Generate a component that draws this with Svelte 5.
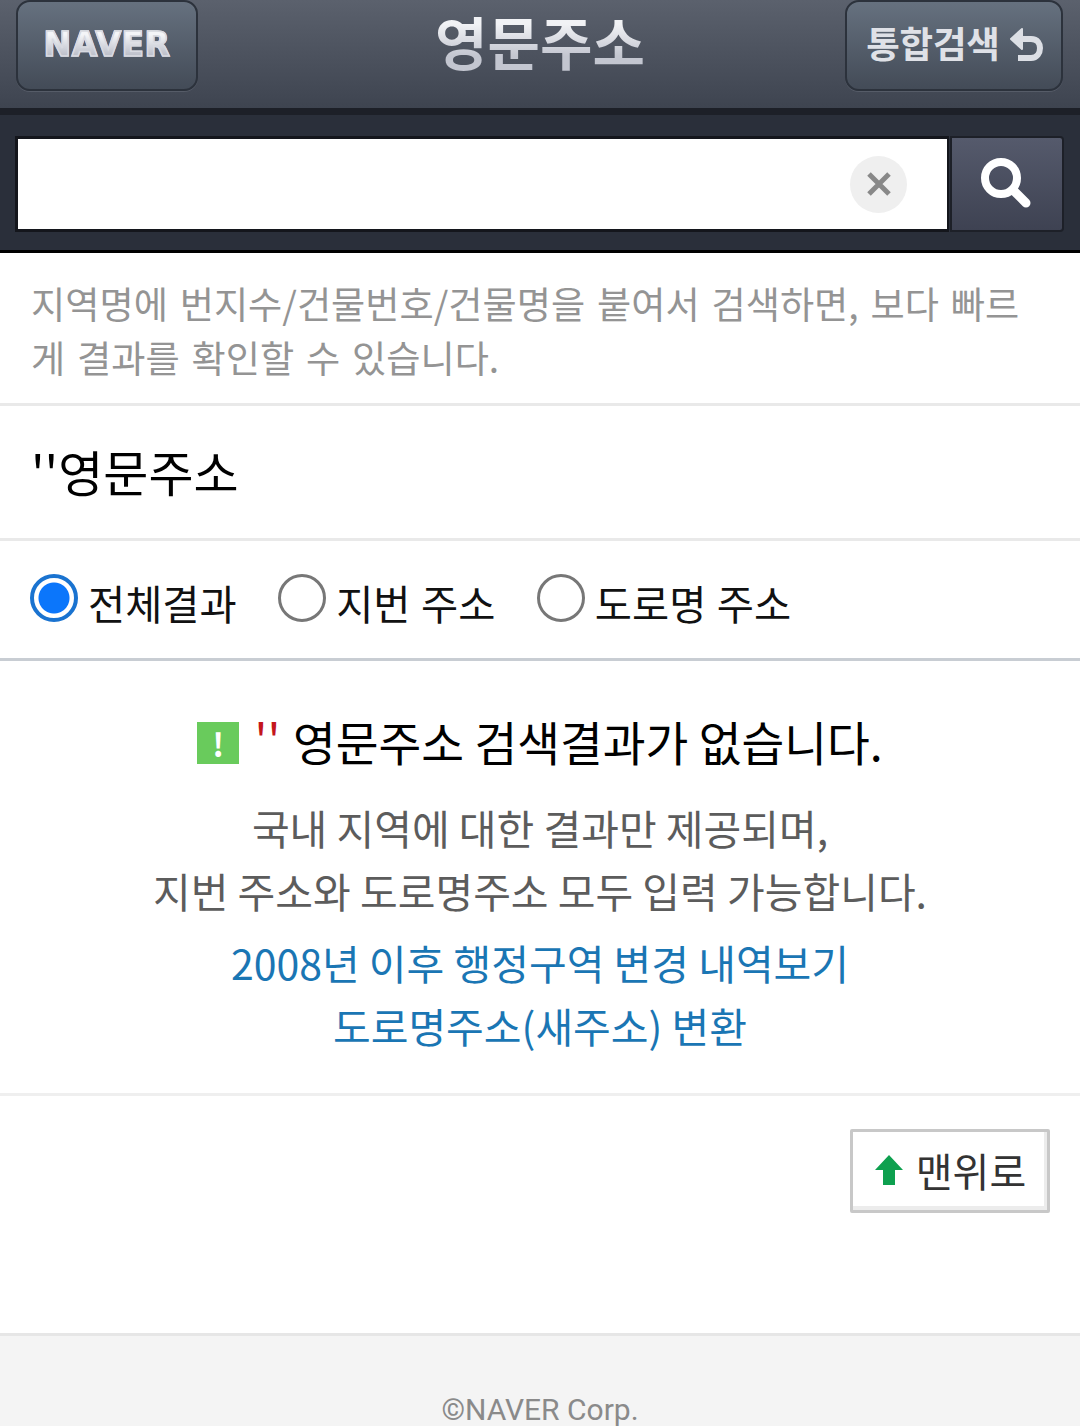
<script>
  let scope = $state('all');
  const scopes = [
    { id: 'all', label: '전체결과' },
    { id: 'lot', label: '지번 주소' },
    { id: 'road', label: '도로명 주소' },
  ];
</script>

<div class="page">
  <header class="topbar">
    <a class="top-btn logo"><span>NAVER</span></a>
    <h1>영문주소</h1>
    <a class="top-btn back">
      <span class="back-label">통합검색</span>
      <svg width="34" height="34" viewBox="0 0 34 34" fill="none">
        <path d="M10 12H22C29 12 31 17 31 21C31 26 28 31 22 31H9" stroke="#dcdfe5" stroke-width="6" />
        <path d="M13 2V22L2 12Z" fill="#dcdfe5" stroke="#dcdfe5" stroke-width="2" stroke-linejoin="round" />
      </svg>
    </a>
  </header>

  <div class="searchbar">
    <div class="field">
      <span class="clear">
        <svg width="26" height="26" viewBox="0 0 26 26">
          <path d="M3 3L23 23M23 3L3 23" stroke="#888" stroke-width="5" />
        </svg>
      </span>
    </div>
    <button class="go" aria-label="검색">
      <svg width="54" height="54" viewBox="0 0 54 54" fill="none">
        <circle cx="21" cy="21" r="16" stroke="#fff" stroke-width="8" />
        <path d="M33 33L46 46" stroke="#fff" stroke-width="9" stroke-linecap="round" />
      </svg>
    </button>
  </div>

  <p class="hint">지역명에 번지수/건물번호/건물명을 붙여서 검색하면, 보다 빠르게 결과를 확인할 수 있습니다.</p>

  <div class="query">''영문주소</div>

  <div class="scopes">
    {#each scopes as item}
      <label class="scope">
        <input type="radio" name="scope" value={item.id} bind:group={scope} />
        <span>{item.label}</span>
      </label>
    {/each}
  </div>

  <section class="empty">
    <h2>
      <span class="warn">!</span>
      <em>''</em>
      영문주소 검색결과가 없습니다.
    </h2>
    <p class="desc">국내 지역에 대한 결과만 제공되며,<br />지번 주소와 도로명주소 모두 입력 가능합니다.</p>
    <p class="links">
      <a>2008년 이후 행정구역 변경 내역보기</a>
      <a>도로명주소(새주소) 변환</a>
    </p>
  </section>

  <div class="totop-row">
    <a class="totop">
      <svg width="30" height="32" viewBox="0 0 30 32">
        <path d="M15 1L29 16H21V31H9V16H1Z" fill="#0ea04f" />
      </svg>
      맨위로
    </a>
  </div>

  <footer>©NAVER Corp.</footer>
</div>

<style>
  :global(body) {
    background: #fff;
  }

  .page {
    height: 1426px;
    overflow: hidden;
    display: flex;
    flex-direction: column;
    font-family: "Noto Sans CJK KR", "Noto Sans", sans-serif;
  }

  .page > * {
    flex: none;
  }

  .topbar {
    height: 108px;
    padding: 0 17px 0 16px;
    display: flex;
    align-items: flex-start;
    justify-content: space-between;
    position: relative;
    background: linear-gradient(#5b616d, #3e4450);
    border-bottom: 7px solid #1d2028;
  }

  .top-btn {
    height: 91px;
    box-sizing: border-box;
    border: 2px solid #2c323c;
    border-radius: 14px;
    background: linear-gradient(#66717f, #434b57);
    box-shadow: 0 1px 0 #565c68;
    display: flex;
    align-items: center;
    justify-content: center;
    color: #dfe1e7;
  }

  .logo {
    width: 182px;
    font-family: "DejaVu Sans", sans-serif;
    font-weight: 700;
    font-size: 33px;
    letter-spacing: 0.5px;
  }

  .logo span {
    background: linear-gradient(#f4f5f8 25%, #bfc2cc 75%);
    -webkit-background-clip: text;
    background-clip: text;
    color: transparent;
    -webkit-text-stroke: 1.5px #d8dae1;
    margin-bottom: 2px;
  }

  .back {
    width: 218px;
    gap: 9px;
    padding-left: 1px;
  }

  .back-label {
    font-size: 36.5px;
    font-weight: 700;
    letter-spacing: -0.2px;
    margin-bottom: 6px;
  }

  .back svg {
    margin-bottom: 4px;
  }

  h1 {
    margin: 0;
    position: absolute;
    left: 0;
    right: 0;
    top: 0;
    text-align: center;
    font-size: 57px;
    line-height: 80px;
    font-weight: 700;
    background: linear-gradient(#f1f2f5 30%, #c3c6d0 70%);
    -webkit-background-clip: text;
    background-clip: text;
    color: transparent;
    pointer-events: none;
  }

  .searchbar {
    height: 135px;
    box-sizing: border-box;
    padding: 21px 16px 18px 15px;
    background: #2a2f3a;
    display: flex;
    gap: 1px;
  }

  .field {
    flex: 1;
    box-sizing: border-box;
    height: 96px;
    background: #fff;
    border: 3px solid #14161c;
    border-right-width: 2px;
    display: flex;
    align-items: center;
    justify-content: flex-end;
    padding-right: 40px;
  }

  .clear {
    width: 57px;
    height: 57px;
    border-radius: 50%;
    background: #efefef;
    display: flex;
    align-items: center;
    justify-content: center;
  }

  .go {
    width: 114px;
    height: 96px;
    box-sizing: border-box;
    border: 2px solid #1d2028;
    border-radius: 0 4px 4px 0;
    background: linear-gradient(#555a6c, #3e4252);
    padding: 0;
    display: flex;
    align-items: center;
    justify-content: center;
  }

  .hint {
    margin: 0;
    border-top: 3px solid #000;
    border-bottom: 3px solid #e9e9e9;
    padding: 23px 31px 19px;
    font-size: 37.2px;
    word-spacing: 3.5px;
    line-height: 54px;
    color: #949494;
  }

  .query {
    height: 135px;
    box-sizing: border-box;
    padding-left: 31px;
    padding-bottom: 3px;
    border-bottom: 3px solid #e9e9e9;
    display: flex;
    align-items: center;
    font-size: 49px;
    color: #000;
  }

  .scopes {
    height: 120px;
    box-sizing: border-box;
    padding-left: 30px;
    border-bottom: 3px solid #c8cdd3;
    display: flex;
    align-items: center;
    gap: 41.5px;
  }

  .scope {
    display: flex;
    align-items: center;
    gap: 10px;
    font-size: 40.4px;
    word-spacing: 1.5px;
    color: #111;
  }

  .scope span {
    margin-top: 5px;
  }

  .scope input {
    appearance: none;
    margin: 0 0 4px;
    width: 48px;
    height: 48px;
    border: 3px solid #777;
    border-radius: 50%;
    box-sizing: border-box;
    background: #fff;
  }

  .scope input:checked {
    border: 4px solid #1a73d0;
    background: radial-gradient(circle, #0b76fb 0 15px, #fff 16px);
  }

  .empty {
    height: 435px;
    box-sizing: border-box;
    padding-top: 44px;
    border-bottom: 3px solid #efefef;
    text-align: center;
  }

  h2 {
    margin: 0;
    font-size: 46.5px;
    line-height: 66px;
    font-weight: 400;
    color: #000;
  }

  .warn {
    display: inline-block;
    width: 42px;
    height: 42px;
    margin-right: 5px;
    background: #69cb5c;
    color: #fff;
    font-size: 32px;
    line-height: 42px;
    font-weight: 700;
    vertical-align: 4px;
  }

  h2 em {
    font-style: normal;
    color: #c4161c;
    margin-right: 2px;
    vertical-align: 3px;
  }

  .desc {
    margin: 22px 0 0;
    font-size: 41px;
    line-height: 63px;
    color: #5c5c5c;
  }

  .links {
    margin: 9px 0 0;
    font-size: 41px;
    line-height: 63px;
  }

  .links a {
    display: block;
    color: #1a76b4;
  }

  .totop-row {
    height: 240px;
    box-sizing: border-box;
    padding: 33px 30px 0 0;
    border-bottom: 3px solid #e6e6e6;
    display: flex;
    justify-content: flex-end;
    align-items: flex-start;
  }

  .totop {
    width: 200px;
    height: 84px;
    box-sizing: border-box;
    padding-bottom: 3px;
    border: 3px solid #c8c8c8;
    box-shadow: inset -3px -4px 0 #ececec;
    border-radius: 2px;
    display: flex;
    align-items: center;
    justify-content: center;
    gap: 12px;
    font-size: 40px;
    color: #333;
  }

  footer {
    background: #f4f4f4;
    text-align: center;
    padding: 60px 0 0;
    height: 90px;
    font-family: Roboto, sans-serif;
    font-size: 30px;
    line-height: 28px;
    color: #8a8a8a;
  }
</style>
